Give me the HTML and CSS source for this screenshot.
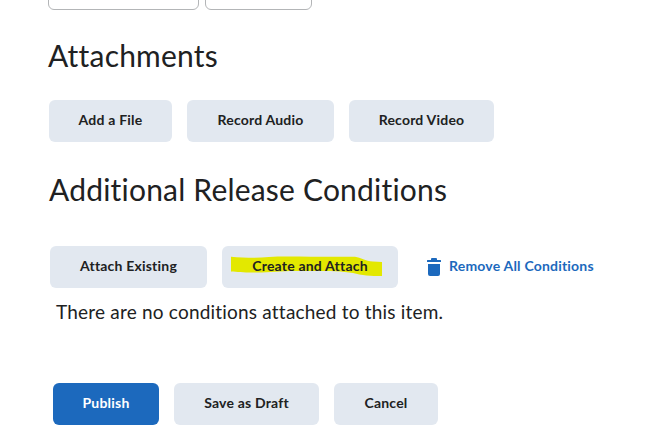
FILE: index.html
```html
<!DOCTYPE html>
<html lang="en">
<head>
<meta charset="utf-8">
<title>Attachments</title>
<link rel="stylesheet" href="styles.css">
</head>
<body>
<main>
  <div class="fields"><div class="field field-date"></div><div class="field field-time"></div></div>
  <h2 class="title-attachments">Attachments</h2>
  <div class="row row-attachments">
    <button class="btn w-file">Add a File</button>
    <button class="btn w-audio">Record Audio</button>
    <button class="btn w-video">Record Video</button>
  </div>
  <h2 class="title-conditions">Additional Release Conditions</h2>
  <div class="row row-conditions">
    <button class="btn w-existing">Attach Existing</button>
    <button class="btn w-create">
      <svg class="marker" width="152" height="22" viewBox="0 0 152 22"><path d="M0 1.700C12 2.500 25 3.500 38 2C52 1 66 1.700 80 1.700H124C130 2.500 134 6 142 6.500L151 7V21C140 21 130 20.500 122 18C108 15.500 86 16 64 16C48 16 36 18 22 17.500C12 17.500 6 17 0 16.500Z" fill="#e3e800"/></svg>
      <span class="label">Create and Attach</span>
    </button>
    <a class="remove"><svg width="14" height="18" viewBox="0 0 14 18" fill="#1c69bd"><path d="M0 2.500Q0 2 .5 2H4V1Q4 0 5 0H9Q10 0 10 1V2H13.500Q14 2 14 2.500V4H0ZM1 6H13V16Q13 18 11 18H3Q1 18 1 16Z"/></svg><span>Remove All Conditions</span></a>
  </div>
  <p class="empty">There are no conditions attached to this item.</p>
  <div class="row row-actions">
    <button class="btn primary w-publish">Publish</button>
    <button class="btn w-draft">Save as Draft</button>
    <button class="btn w-cancel">Cancel</button>
  </div>
</main>
</body>
</html>
```
FILE: styles.css
```css
* { box-sizing: border-box; }
body { margin: 0; background: #fff; color: #202122; font-family: Lato, sans-serif; overflow: hidden; }
.fields { display: flex; gap: 6px; padding-left: 48px; height: 10px; align-items: flex-end; }
.field { height: 42px; border: 1px solid #b3b5b7; border-radius: 6px; flex: none; }
.field-date { width: 151px; }
.field-time { width: 107px; }
h2 { margin: 0; font-size: 30px; line-height: 36px; font-weight: 400; font-variant-ligatures: none; letter-spacing: 0.2px; white-space: nowrap; }
.title-attachments { padding: 27px 0 0 48px; }
.title-conditions { padding: 29px 0 0 49px; }
.row { display: flex; gap: 15px; height: 42px; }
.row-attachments { margin: 27px 0 0 49px; }
.row-conditions { margin: 39px 0 0 50px; }
.row-actions { margin: 56px 0 0 53px; }
.btn { position: relative; flex: none; height: 42px; padding: 0 0 2px; border: 0; border-radius: 6px; background: #e2e8f0; color: #202122; font: 700 14px/20px Lato, sans-serif; letter-spacing: 0.2px; white-space: nowrap; }
.primary { background: #1c69bd; color: #fff; }
.w-file { width: 123px; }
.w-audio { width: 147px; }
.w-video { width: 145px; }
.w-existing { width: 157px; }
.w-create { width: 176px; }
.w-publish { width: 106px; }
.w-draft { width: 145px; }
.w-cancel { width: 104px; }
.marker { position: absolute; left: 9px; top: 9px; }
.label { position: relative; }
.remove { display: flex; align-items: center; gap: 8px; margin-left: 14px; color: #1c69bd; font-size: 14px; line-height: 20px; font-weight: 700; letter-spacing: 0.2px; white-space: nowrap; }
.remove span { padding-bottom: 2px; }
.empty { margin: 9px 0 0 56px; font-size: 19px; line-height: 30px; letter-spacing: 0.2px; white-space: nowrap; }
```
